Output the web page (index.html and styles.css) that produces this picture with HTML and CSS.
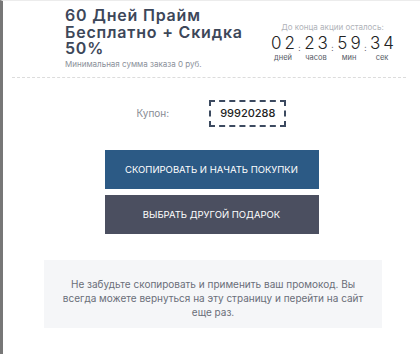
FILE: index.html
```html
<!DOCTYPE html>
<html lang="ru">
<head>
  <meta charset="UTF-8" />
  <meta name="viewport" content="width=device-width, initial-scale=1.0"/>
  <title>Купон</title>
  <link rel="stylesheet" href="styles.css">
</head>
<body>
  <div class="page">
    <div class="offer">
      <div class="offer-info">
        <h1 class="offer-title">60 Дней Прайм Бесплатно + Скидка 50%</h1>
        <div class="offer-min">Минимальная сумма заказа 0 руб.</div>
      </div>

      <div class="timer">
        <div class="timer-caption">До конца акции осталось:</div>
        <div class="timer-row">
          <div class="timer-unit">
            <div class="timer-num">02</div>
            <div class="timer-label">дней</div>
          </div>
          <div class="timer-sep">:</div>
          <div class="timer-unit">
            <div class="timer-num">23</div>
            <div class="timer-label">часов</div>
          </div>
          <div class="timer-sep">:</div>
          <div class="timer-unit">
            <div class="timer-num">59</div>
            <div class="timer-label">мин</div>
          </div>
          <div class="timer-sep">:</div>
          <div class="timer-unit">
            <div class="timer-num">34</div>
            <div class="timer-label">сек</div>
          </div>
        </div>
      </div>
    </div>

    <div class="coupon">
      <span class="coupon-label">Купон:</span>
      <span class="coupon-code">99920288</span>
    </div>

    <div class="actions">
      <a class="btn btn-primary" href="#">Скопировать и начать покупки</a>
      <a class="btn btn-secondary" href="#">Выбрать другой подарок</a>
    </div>

    <div class="note">
      Не забудьте скопировать и применить ваш промокод. Вы всегда можете вернуться на эту страницу и перейти на сайт еще раз.
    </div>
  </div>
</body>
</html>
```

FILE: styles.css
```css
body {
  margin: 0;
  background-color: #ffffff;
  font-family: Inter, "Noto Sans", sans-serif;
  color: #3a4354;
}

.page {
  height: 354px;
  border-left: 3px solid #777;
  border-top: 1px solid #ececec;
  box-sizing: border-box;
}

.offer {
  display: flex;
  justify-content: space-between;
  margin: 0 14px 0 9px;
  padding: 6px 11px 8px 53px;
  border-bottom: 1px dashed #dcdcdc;
}

.offer-info {
  width: 200px;
}

.offer-title {
  margin: 0;
  font-size: 16px;
  line-height: 16.5px;
  font-weight: 600;
  letter-spacing: 0.8px;
  color: #3d4759;
}

.offer-min {
  margin-top: 2px;
  font-size: 8px;
  color: #8a8f99;
}

.timer {
  padding-top: 15px;
  text-align: center;
}

.timer-caption {
  font-size: 8px;
  line-height: 10px;
  color: #b0b3b9;
  margin-bottom: 1px;
}

.timer-row {
  display: flex;
  justify-content: center;
  align-items: flex-start;
}

.timer-unit {
  display: flex;
  flex-direction: column;
  align-items: center;
  width: 26px;
}

.timer-num {
  font-size: 17px;
  line-height: 20px;
  font-weight: 300;
  letter-spacing: 3px;
  padding-left: 3px;
  color: #222;
}

.timer-label {
  font-size: 7.5px;
  line-height: 9px;
  color: #555a64;
}

.timer-sep {
  width: 7px;
  font-size: 8px;
  line-height: 8px;
  color: #555;
  padding-top: 11px;
}

.coupon {
  display: flex;
  align-items: center;
  justify-content: center;
  gap: 40px;
  margin-top: 22px;
}

.coupon-label {
  font-size: 10px;
  color: #888c94;
}

.coupon-code {
  border: 2px dashed #3c4a60;
  padding: 4px 9px;
  font-size: 11px;
  line-height: 15px;
  font-weight: 500;
  color: #222;
}

.actions {
  display: flex;
  flex-direction: column;
  align-items: center;
  gap: 6px;
  margin-top: 23px;
}

.btn {
  display: flex;
  align-items: center;
  justify-content: center;
  width: 214px;
  height: 39px;
  color: #fff;
  font-size: 9.5px;
  text-transform: uppercase;
  text-decoration: none;
}

.btn-primary {
  background-color: #2c5a85;
}

.btn-secondary {
  background-color: #4b4f60;
}

.note {
  margin: 26px 38px 0 41px;
  padding: 17px 18px 9px;
  background-color: #f5f6f8;
  font-size: 10px;
  line-height: 14px;
  color: #6a6e78;
  text-align: center;
}
```
